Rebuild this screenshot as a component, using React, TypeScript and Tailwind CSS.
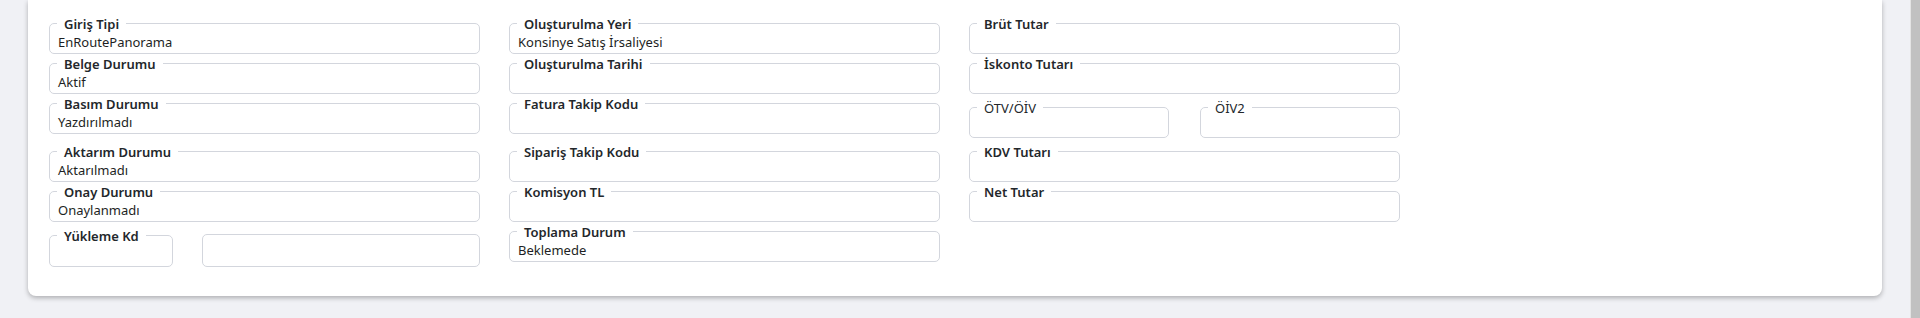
import React from "react"

type FieldProps = {
	label: string
	value?: string
	light?: boolean
	className?: string
}

const Field: React.FC<FieldProps> = ({ label, value, light, className }) => (
	<fieldset className={`border border-[#d3d6dd] rounded-[5px] pl-[7px] pr-2 min-w-0 ${className ?? ""}`}>
		<legend
			className={`px-[7px] pt-[2px] text-[13px] leading-[17px] text-[#23272b] ${light ? "font-normal" : "font-semibold"}`}
		>
			{label}
		</legend>
		<div className="h-[20px] leading-[18px] pl-px text-[13px] text-[#1d1f24] whitespace-nowrap">{value}</div>
	</fieldset>
)

const App: React.FC = () => {
	return (
		<div className="flex h-[318px] w-[1920px] bg-[#f0f1f5] font-['Noto_Sans','Open_Sans',sans-serif]">
			<div className="flex-1">
				<div className="mx-[28px] bg-white rounded-b-[8px] shadow-[0_2px_5px_rgba(0,0,0,0.28)] pt-[14px] pb-[29px] pl-[21px]">
					<div className="grid grid-cols-[431px_431px_431px] gap-x-[29px] items-start">
						<Field label="Giriş Tipi" value="EnRoutePanorama" />
						<Field label="Oluşturulma Yeri" value="Konsinye Satış İrsaliyesi" />
						<Field label="Brüt Tutar" />

						<Field label="Belge Durumu" value="Aktif" />
						<Field label="Oluşturulma Tarihi" />
						<Field label="İskonto Tutarı" />

						<Field label="Basım Durumu" value="Yazdırılmadı" />
						<Field label="Fatura Takip Kodu" />
						<div className="grid grid-cols-2 gap-x-[31px] py-1">
							<Field label="ÖTV/ÖİV" light />
							<Field label="ÖİV2" light />
						</div>

						<Field label="Aktarım Durumu" value="Aktarılmadı" />
						<Field label="Sipariş Takip Kodu" />
						<Field label="KDV Tutarı" />

						<Field label="Onay Durumu" value="Onaylanmadı" />
						<Field label="Komisyon TL" />
						<Field label="Net Tutar" />

						<div className="grid grid-cols-[124px_1fr] gap-x-[29px] items-start pt-1">
							<Field label="Yükleme Kd" className="h-[41px]" />
							<div className="mt-[8px] h-[33px] border border-[#d3d6dd] rounded-[5px]" />
						</div>
						<Field label="Toplama Durum" value="Beklemede" />
						<div />
					</div>
				</div>
			</div>
			<div className="w-[10px] bg-[#c1c1c1] border-l border-[#e4e4e4]" />
		</div>
	)
}

export default App
